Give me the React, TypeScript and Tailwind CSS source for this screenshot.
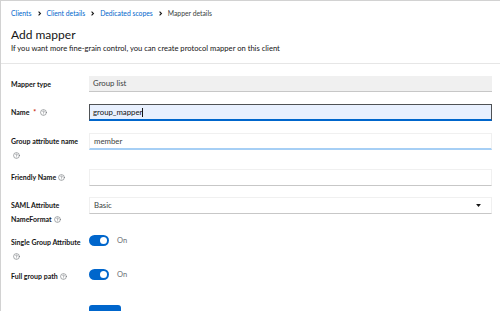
import { CircleHelp } from "lucide-react";

const font = { fontFamily: 'Lato, "Liberation Sans", sans-serif' };

const Help = () => (
  <CircleHelp className="inline-block w-[7px] h-[7px] text-[#6a6e73] align-[-1px] ml-[2px]" strokeWidth={2} />
);

const Chevron = () => (
  <svg viewBox="0 0 8 8" className="w-[5px] h-[5px] mx-[5px] text-[#151515]">
    <path d="M2.5 1 L5.5 4 L2.5 7" fill="none" stroke="currentColor" strokeWidth="1.8" />
  </svg>
);

const Toggle = () => (
  <div className="flex items-center gap-[8px]">
    <div className="w-[20px] h-[11px] rounded-full bg-[#0066cc] flex items-center justify-end pr-[2px]">
      <div className="w-[7px] h-[7px] rounded-full bg-white" />
    </div>
    <span className="text-[7.5px] text-[#6a6e73]">On</span>
  </div>
);

const Row = ({ h, label, children }: { h: string; label: React.ReactNode; children: React.ReactNode }) => (
  <div className={`flex ${h}`}>
    <div className="w-[78px] pt-[1px] pr-[4px] text-[7px] leading-[14px] font-bold text-[#151515]">
      {label}
    </div>
    <div className="flex-1">{children}</div>
  </div>
);

export default function App() {
  return (
    <div style={font} className="w-[500px] h-[311px] overflow-hidden bg-white border-l border-t border-[#d2d2d2]">
      {/* HEADER */}
      <div className="px-[10px] pt-[8px] h-[63px] border-b border-[#e6e6e6]">
        <nav className="flex items-center text-[6.8px] leading-[9px]">
          <span className="text-[#0066cc]">Clients</span>
          <Chevron />
          <span className="text-[#0066cc]">Client details</span>
          <Chevron />
          <span className="text-[#0066cc]">Dedicated scopes</span>
          <Chevron />
          <span className="text-[#3c3f42]">Mapper details</span>
        </nav>
        <h1 className="mt-[8px] text-[12px] leading-[17px] text-[#151515]">Add mapper</h1>
        <p className="text-[7.6px] leading-[10px] text-[#151515]">
          If you want more fine-grain control, you can create protocol mapper on this client
        </p>
      </div>

      {/* FORM */}
      <div className="pl-[10px] pr-[8px] pt-[12px]">
        <Row h="h-[28px]" label="Mapper type">
          <div className="h-[16px] bg-[#f0f0f0] border-b border-[#c7c7c7] px-[4px] text-[7.8px] leading-[15px] text-[#3c3f42]">
            Group list
          </div>
        </Row>

        <Row
          h="h-[29px]"
          label={
            <>
              Name <span className="text-[#c9190b] mx-[2px]">*</span>
              <Help />
            </>
          }
        >
          <div className="h-[17px] bg-[#e8f0fe] border border-[#4f5255] border-b-2 border-b-[#0066cc] px-[3px] text-[7.8px] leading-[14px] text-[#151515]">
            group_mapper<span className="inline-block w-px h-[9px] bg-[#151515] align-[-2px]" />
          </div>
        </Row>

        <Row
          h="h-[36px]"
          label={
            <>
              Group attribute name
              <br />
              <Help />
            </>
          }
        >
          <div className="h-[17px] bg-white border border-[#f0f0f0] border-b-2 border-b-[#a6cff5] px-[4px] text-[7.8px] leading-[14px] text-[#3c3f42]">
            member
          </div>
        </Row>

        <Row
          h="h-[28px]"
          label={
            <>
              Friendly Name
              <Help />
            </>
          }
        >
          <div className="h-[17px] bg-white border border-[#f0f0f0] border-b-[#c7c7c7]" />
        </Row>

        <Row
          h="h-[37px]"
          label={
            <>
              SAML Attribute
              <br />
              NameFormat
              <Help />
            </>
          }
        >
          <div className="h-[17px] bg-white border border-[#f0f0f0] border-b-[#c7c7c7] px-[4px] flex items-center justify-between text-[7.8px] text-[#3c3f42]">
            <span>Basic</span>
            <svg viewBox="0 0 8 5" className="w-[5px] h-[3px] mr-[6px]">
              <path d="M0 0 H8 L4 5 Z" fill="#151515" />
            </svg>
          </div>
        </Row>

        <Row
          h="h-[34px]"
          label={
            <>
              Single Group Attribute
              <br />
              <Help />
            </>
          }
        >
          <div className="pt-[1px]">
            <Toggle />
          </div>
        </Row>

        <Row
          h="h-[37px]"
          label={
            <>
              Full group path
              <Help />
            </>
          }
        >
          <div className="pt-[1px]">
            <Toggle />
          </div>
        </Row>

        <div className="flex">
          <div className="w-[78px]" />
          <button className="w-[32px] h-[20px] rounded-[3px] bg-[#0066cc]" />
        </div>
      </div>
    </div>
  );
}
